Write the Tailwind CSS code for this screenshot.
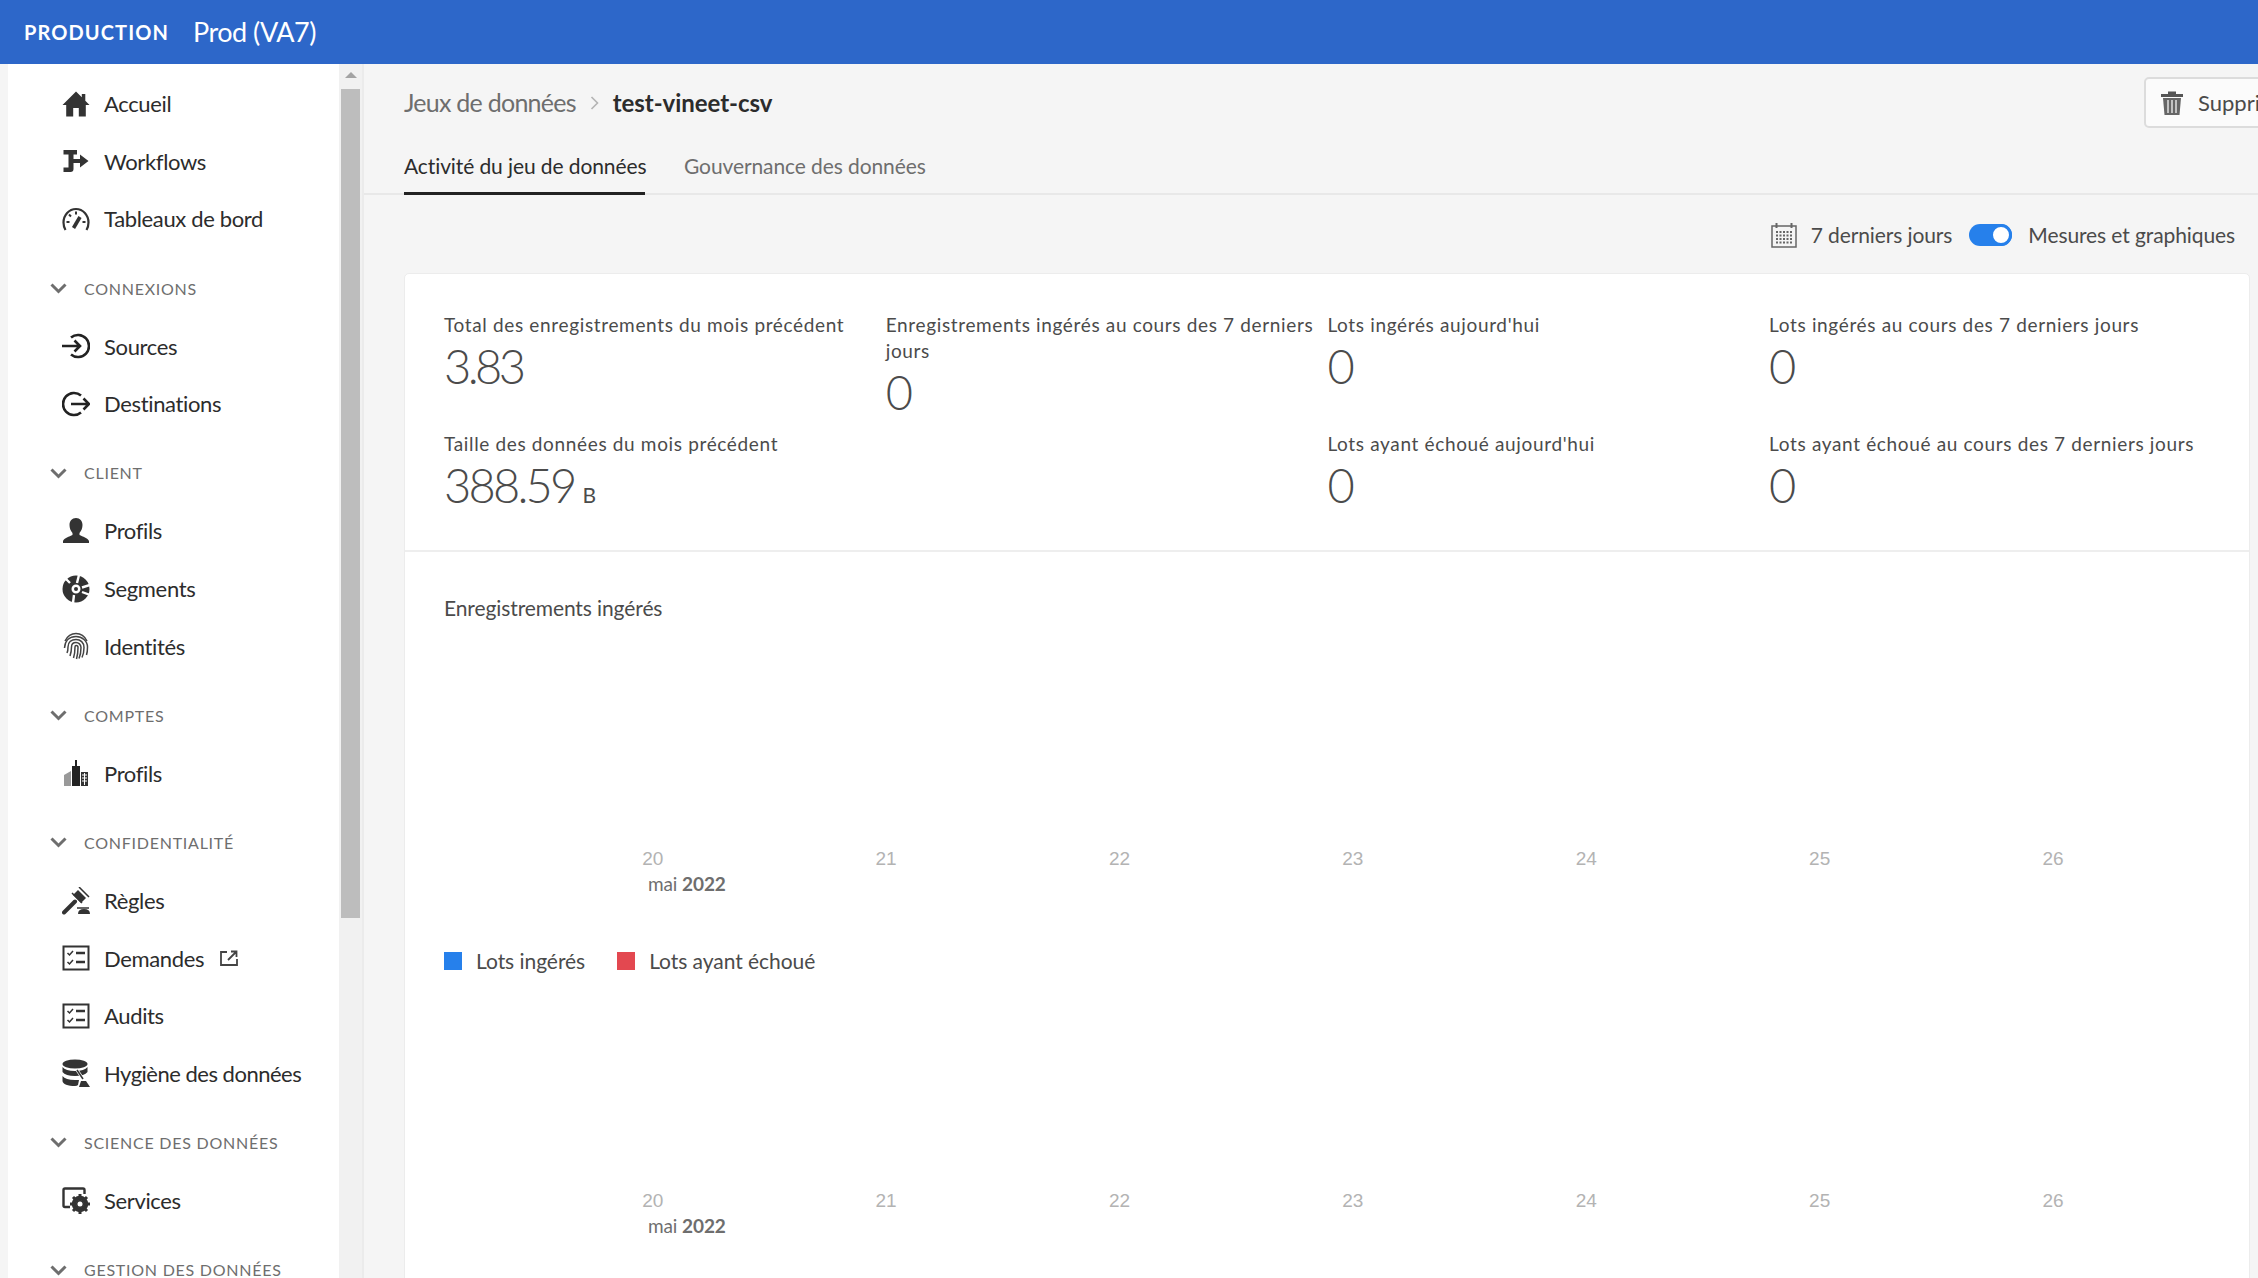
<!DOCTYPE html>
<html lang="fr">
<head>
    <meta charset="UTF-8">
    <title>Jeux de données - test-vineet-csv</title>
    <script src="https://cdn.jsdelivr.net/npm/@tailwindcss/browser@4"></script>
</head>
<body class="bg-[#f5f5f5] font-[Lato,sans-serif] overflow-hidden">
<div class="w-[2258px] h-[1278px] flex flex-col overflow-hidden">
    <!-- top bar -->
    <header class="h-16 shrink-0 bg-[#2d67c9] text-white flex items-center pl-6">
        <span class="w-[169px] text-[20px] font-bold tracking-[1.1px]">PRODUCTION</span>
        <span class="text-[27px] tracking-[-0.5px]">Prod (VA7)</span>
    </header>

    <div class="flex flex-1 min-h-0">
        <!-- left nav -->
        <aside class="w-[331px] ml-2 shrink-0 bg-white pt-[11px] text-[#2c2c2c] text-[22px] tracking-[-0.35px] overflow-hidden">
            <a class="h-[57.6px] flex items-center pl-[54px] gap-[14px]">
                <svg class="w-7 h-7 shrink-0" viewBox="0 0 28 28" fill="#333"><path d="M14 1.500 0.500 15h3.700v11.500h7V18h5.600v8.500h7V15h3.700l-4.200-4.200V4h-3.500v3.300z"/></svg>
                <span>Accueil</span>
            </a>
            <a class="h-[57.6px] flex items-center pl-[54px] gap-[14px]">
                <svg class="w-7 h-7 shrink-0" viewBox="0 0 28 28" fill="#333"><path d="M1.500 3H15v4.500h-3.500V12H18V7.500l8.500 6.500-8.500 6.500V16h-6.500v6q0 3-3 3h-7v-4.500h5V7.500h-5z"/></svg>
                <span>Workflows</span>
            </a>
            <a class="h-[57.6px] flex items-center pl-[54px] gap-[14px]">
                <svg class="w-7 h-7 shrink-0" viewBox="0 0 28 28" fill="none" stroke="#333" stroke-width="2.200"><path d="M3.500 25C2 22.500 1.500 20.500 1.500 17.500 1.500 10 7 4 14 4s12.500 6 12.500 13.500c0 3-.5 5-2 7.500"/><path d="M11.500 23 18 12" stroke-width="3.600"/><path d="M14 6.500v3M7 9.500l2 2M4.500 17h3M23.500 17h-3" stroke-width="2"/></svg>
                <span>Tableaux de bord</span>
            </a>

            <div class="h-[57.6px] mt-3 flex items-center pl-[42px] gap-[17px] text-[#6e6e6e] text-[16px] tracking-[0.75px]">
                <svg class="w-[17px] h-[11px] shrink-0" viewBox="0 0 17 11" fill="none" stroke="#6e6e6e" stroke-width="3"><path d="m1.500 1.500 7 7 7-7"/></svg>
                <span>CONNEXIONS</span>
            </div>
            <a class="h-[57.6px] flex items-center pl-[54px] gap-[14px]">
                <svg class="w-7 h-7 shrink-0" viewBox="0 0 28 28" fill="none" stroke="#222" stroke-width="2.600"><path d="M9 5.500a11 11 0 1 1 0 17"/><path d="M0 14h18M12.500 8.500 18 14l-5.500 5.500"/></svg>
                <span>Sources</span>
            </a>
            <a class="h-[57.6px] flex items-center pl-[54px] gap-[14px]">
                <svg class="w-7 h-7 shrink-0" viewBox="0 0 28 28" fill="none" stroke="#222" stroke-width="2.600"><path d="M19 5.500a11 11 0 1 0 0 17"/><path d="M9 14h18M21.500 8.500 27 14l-5.500 5.500"/></svg>
                <span>Destinations</span>
            </a>

            <div class="h-[57.6px] mt-3 flex items-center pl-[42px] gap-[17px] text-[#6e6e6e] text-[16px] tracking-[0.75px]">
                <svg class="w-[17px] h-[11px] shrink-0" viewBox="0 0 17 11" fill="none" stroke="#6e6e6e" stroke-width="3"><path d="m1.500 1.500 7 7 7-7"/></svg>
                <span>CLIENT</span>
            </div>
            <a class="h-[57.6px] flex items-center pl-[54px] gap-[14px]">
                <svg class="w-7 h-7 shrink-0" viewBox="0 0 28 28" fill="#333"><path d="M14 1c4 0 6.500 3 6.500 7 0 3-1.200 6-3 8v2c3 1.500 8.500 3 9.500 6v2H1v-2c1-3 6.500-4.500 9.500-6v-2c-1.800-2-3-5-3-8 0-4 2.500-7 6.500-7z"/></svg>
                <span>Profils</span>
            </a>
            <a class="h-[57.6px] flex items-center pl-[54px] gap-[14px]">
                <svg class="w-7 h-7 shrink-0" viewBox="0 0 28 28"><circle cx="14" cy="14" r="9" fill="none" stroke="#333" stroke-width="9"/><circle cx="14" cy="14" r="2" fill="#333"/><path d="M15 8 17 0M20 12.500 28 10M20 17l8 3M8 8 3 3M12 20 11 28" stroke="#fff" stroke-width="2.400"/></svg>
                <span>Segments</span>
            </a>
            <a class="h-[57.6px] flex items-center pl-[54px] gap-[14px]">
                <svg class="w-7 h-7 shrink-0" viewBox="0 0 28 28" fill="none" stroke="#444" stroke-width="1.500"><path d="M3 9C6 3 10 1.500 14 1.500s8 1.500 11 7.500"/><path d="M2.500 16C3 8 8 4.500 14 4.500S25.500 9 25.500 15c0 3 0 5-1 8"/><path d="M5 21c1-2 1-4 1-6 0-5 3.500-7.500 8-7.500s8 3 8 8c0 4-.5 7-2 10"/><path d="M8 24c1-3 1.500-6 1.500-9 0-3 2-4.500 4.500-4.500s5 2 5 5c0 4-.5 7.500-2 11"/><path d="M11.500 26c1-3 1.500-7 1.500-11 0-1 .5-1.500 1.200-1.500s1.800.5 1.800 2c0 4-.5 8-1.500 11.500"/></svg>
                <span>Identités</span>
            </a>

            <div class="h-[57.6px] mt-3 flex items-center pl-[42px] gap-[17px] text-[#6e6e6e] text-[16px] tracking-[0.75px]">
                <svg class="w-[17px] h-[11px] shrink-0" viewBox="0 0 17 11" fill="none" stroke="#6e6e6e" stroke-width="3"><path d="m1.500 1.500 7 7 7-7"/></svg>
                <span>COMPTES</span>
            </div>
            <a class="h-[57.6px] flex items-center pl-[54px] gap-[14px]">
                <svg class="w-7 h-7 shrink-0" viewBox="0 0 28 28"><path d="M2 27V16l7-4v15z" fill="#999"/><path d="M10 27V7h3V1h2v6h3v20z" fill="#222"/><path d="M19 27V13h7v14z" fill="#333"/><path d="M20 16h5M20 19h5M20 22h5M22.500 14v12" stroke="#fff" stroke-width="1"/></svg>
                <span>Profils</span>
            </a>

            <div class="h-[57.6px] mt-3 flex items-center pl-[42px] gap-[17px] text-[#6e6e6e] text-[16px] tracking-[0.75px]">
                <svg class="w-[17px] h-[11px] shrink-0" viewBox="0 0 17 11" fill="none" stroke="#6e6e6e" stroke-width="3"><path d="m1.500 1.500 7 7 7-7"/></svg>
                <span>CONFIDENTIALITÉ</span>
            </div>
            <a class="h-[57.6px] flex items-center pl-[54px] gap-[14px]">
                <svg class="w-7 h-7 shrink-0" viewBox="0 0 28 28"><path d="M2 25.500 13 14.500" stroke="#333" stroke-width="4" stroke-linecap="round"/><path d="M11 8l5-5 8 8-5 5z" fill="#333"/><path d="M17 0l10 10M10 6l10 10" stroke="#333" stroke-width="1.500"/><path d="M16 27q0-5 6-5t6 5z" fill="#333"/><path d="M15 21h12" stroke="#333" stroke-width="1.500"/></svg>
                <span>Règles</span>
            </a>
            <a class="h-[57.6px] flex items-center pl-[54px] gap-[14px]">
                <svg class="w-7 h-7 shrink-0" viewBox="0 0 28 28" fill="none" stroke="#333"><rect x="1.500" y="2.500" width="25" height="23" stroke-width="2"/><path d="m5.500 9 2 2 3.500-4M5.500 18l2 2 3.500-4" stroke-width="1.500"/><path d="M14 9h9M14 18h9" stroke-width="2.500"/></svg>
                <span>Demandes</span>
                <svg class="w-[18px] h-[16px] ml-[2px] shrink-0" viewBox="0 0 18 16" fill="none" stroke="#444" stroke-width="1.800"><path d="M7 2H1v13h16V9"/><path d="M8 10 16 2M11 1.500h5.500V7"/></svg>
            </a>
            <a class="h-[57.6px] flex items-center pl-[54px] gap-[14px]">
                <svg class="w-7 h-7 shrink-0" viewBox="0 0 28 28" fill="none" stroke="#333"><rect x="1.500" y="2.500" width="25" height="23" stroke-width="2"/><path d="m5.500 9 2 2 3.500-4M5.500 18l2 2 3.500-4" stroke-width="1.500"/><path d="M14 9h9M14 18h9" stroke-width="2.500"/></svg>
                <span>Audits</span>
            </a>
            <a class="h-[57.6px] flex items-center pl-[54px] gap-[14px]">
                <svg class="w-7 h-7 shrink-0" viewBox="0 0 28 28"><ellipse cx="13" cy="5" rx="12.500" ry="4.500" fill="#333"/><path d="M.5 8q3 4 12.500 4T25.500 8v5q-3 4-12.500 4T.5 13z" fill="#333"/><path d="M.5 17q3 4 12.500 4l4 0-1 5q-1 1-3 1C6 27 .5 25 .5 22z" fill="#333"/><path d="m15 11 6 9" stroke="#fff" stroke-width="3"/><path d="m15 11 6 9" stroke="#333" stroke-width="1.500"/><path d="M17 28l2-6h5l4 6z" fill="#333"/></svg>
                <span class="tracking-[-0.5px]">Hygiène des données</span>
            </a>

            <div class="h-[57.6px] mt-3 flex items-center pl-[42px] gap-[17px] text-[#6e6e6e] text-[16px] tracking-[0.75px]">
                <svg class="w-[17px] h-[11px] shrink-0" viewBox="0 0 17 11" fill="none" stroke="#6e6e6e" stroke-width="3"><path d="m1.500 1.500 7 7 7-7"/></svg>
                <span>SCIENCE DES DONNÉES</span>
            </div>
            <a class="h-[57.6px] flex items-center pl-[54px] gap-[14px]">
                <svg class="w-7 h-7 shrink-0" viewBox="0 0 28 28"><path d="M8 21H3q-1.500 0-1.500-1.500V4Q1.500 2.500 3 2.500h18q1.500 0 1.500 1.500v4" fill="none" stroke="#333" stroke-width="2.400"/><circle cx="18" cy="18" r="6" fill="none" stroke="#333" stroke-width="4.500"/><path d="M18 8v20M8 18h20M11 11l14 14M25 11 11 25" stroke="#333" stroke-width="3"/><circle cx="18" cy="18" r="2.500" fill="#fff"/></svg>
                <span>Services</span>
            </a>

            <div class="h-[57.6px] mt-3 flex items-center pl-[42px] gap-[17px] text-[#6e6e6e] text-[16px] tracking-[0.75px]">
                <svg class="w-[17px] h-[11px] shrink-0" viewBox="0 0 17 11" fill="none" stroke="#6e6e6e" stroke-width="3"><path d="m1.500 1.500 7 7 7-7"/></svg>
                <span>GESTION DES DONNÉES</span>
            </div>
        </aside>

        <!-- scrollbar -->
        <div class="w-[25px] shrink-0 bg-[#f1f1f1] flex flex-col items-center border-r-2 border-[#ebebeb]">
            <div class="mt-[8px] w-0 h-0 border-x-[6px] border-x-transparent border-b-[6px] border-b-[#a3a3a3]"></div>
            <div class="mt-[11px] w-[19px] h-[829px] bg-[#bdbdbd]"></div>
        </div>

        <!-- main -->
        <main class="flex-1 min-w-0 overflow-hidden">
            <div class="pl-10 pt-[13px] flex items-start">
                <div class="w-[1740px] shrink-0 h-[51px] flex items-center text-[25px] tracking-[-0.75px]">
                    <span class="text-[#6e6e6e]">Jeux de données</span>
                    <svg class="w-[9px] h-[14px] mx-[14px]" viewBox="0 0 9 14" fill="none" stroke="#b3b3b3" stroke-width="1.600"><path d="m1.500 1 6 6-6 6"/></svg>
                    <span class="font-bold text-[#2c2c2c] text-[24px] tracking-[-0.05px]">test-vineet-csv</span>
                </div>
                <button class="shrink-0 h-[51px] px-[14px] flex items-center gap-[14px] bg-white/60 border-2 border-[#dcdcdc] rounded-[5px] text-[22px] text-[#4b4b4b] whitespace-nowrap">
                    <svg class="w-[24px] h-[26px] shrink-0" viewBox="0 0 24 26"><path d="M1 4h22v3H1zM8 4V1.500h8V4" fill="#555"/><path d="M3 8h18l-1.500 17h-15z" fill="#666"/><path d="M8 10v13M12 10v13M16 10v13" stroke="#fff" stroke-width="1.200"/></svg>
                    Supprimer le jeu de données
                </button>
            </div>

            <!-- tabs -->
            <div class="h-[67px] px-10 flex items-end border-b-2 border-[#e8e8e8] text-[21px] tracking-[-0.1px]">
                <div class="h-[50px] w-[241px] pb-[5px] flex items-center border-b-[3px] border-[#222] -mb-[2px] text-[#2c2c2c] whitespace-nowrap">Activité du jeu de données</div>
                <div class="h-[50px] ml-[39px] pb-[8px] flex items-center -mb-[2px] text-[#6e6e6e]">Gouvernance des données</div>
            </div>

            <!-- toolbar -->
            <div class="h-[78px] pt-[2px] pr-[23px] flex items-center justify-end text-[21px] tracking-[-0.1px] text-[#4b4b4b]">
                <svg class="w-[26px] h-[25px] mr-[14px] shrink-0" viewBox="0 0 26 25" fill="none" stroke="#666"><rect x="1" y="3" width="24" height="21" stroke-width="1.500"/><path d="M5.500 0v5M20.500 0v5" stroke-width="2"/><path d="M5 9h16M5 12.500h16M5 16h16M5 19.500h16" stroke-width="2" stroke-dasharray="2 1.500"/></svg>
                <span>7 derniers jours</span>
                <span class="ml-[17px] w-[43px] h-[22px] rounded-full bg-[#2680eb] flex items-center justify-end">
                    <span class="w-[22px] h-[22px] rounded-full bg-white border-[3px] border-[#2680eb]"></span>
                </span>
                <span class="ml-[16px]">Mesures et graphiques</span>
            </div>

            <!-- card -->
            <section class="ml-10 w-[1846px] bg-white border border-[#ececec] rounded-[5px] h-[1100px]">
                <div class="h-[278px] border-b-2 border-[#eeeeee] pl-[39px] pt-[38px] grid grid-cols-[441.7px_441.7px_441.7px_441.7px] grid-rows-[119px_100px] text-[#4b4b4b] text-[19px] leading-[26px] tracking-[0.65px]">
                    <div>
                        <div>Total des enregistrements du mois précédent</div>
                        <div class="text-[47px] leading-[50px] mt-[3px] font-light tracking-[-3.6px]">3.83</div>
                    </div>
                    <div class="pr-2">
                        <div>Enregistrements ingérés au cours des 7 derniers jours</div>
                        <div class="text-[47px] leading-[50px] mt-[3px] font-light tracking-[-3.6px]">0</div>
                    </div>
                    <div>
                        <div>Lots ingérés aujourd'hui</div>
                        <div class="text-[47px] leading-[50px] mt-[3px] font-light tracking-[-3.6px]">0</div>
                    </div>
                    <div>
                        <div>Lots ingérés au cours des 7 derniers jours</div>
                        <div class="text-[47px] leading-[50px] mt-[3px] font-light tracking-[-3.6px]">0</div>
                    </div>
                    <div>
                        <div>Taille des données du mois précédent</div>
                        <div class="text-[47px] leading-[50px] mt-[3px] font-light tracking-[-2.8px]">388.59<span class="ml-2 text-[21px] font-normal tracking-normal">B</span></div>
                    </div>
                    <div></div>
                    <div>
                        <div>Lots ayant échoué aujourd'hui</div>
                        <div class="text-[47px] leading-[50px] mt-[3px] font-light tracking-[-3.6px]">0</div>
                    </div>
                    <div>
                        <div>Lots ayant échoué au cours des 7 derniers jours</div>
                        <div class="text-[47px] leading-[50px] mt-[3px] font-light tracking-[-3.6px]">0</div>
                    </div>
                </div>

                <div class="pl-[39px] pt-[42px] h-[295px] text-[21px] leading-[28px] tracking-[-0.1px] text-[#4b4b4b]">Enregistrements ingérés</div>

                <!-- first chart axis -->
                <div class="pl-[131px] grid grid-cols-[repeat(7,233.4px)] text-center font-[Liberation_Sans,sans-serif] text-[19px] leading-[24px] text-[#b3b3b3]">
                    <span>20</span><span>21</span><span>22</span><span>23</span><span>24</span><span>25</span><span>26</span>
                </div>
                <div class="pl-[243px] mt-px text-[19px] leading-[24px] text-[#6e6e6e] tracking-[-0.1px]">mai <b>2022</b></div>

                <div class="pl-[39px] mt-[51px] flex items-center h-[28px] text-[21px] tracking-[-0.05px] text-[#4b4b4b]">
                    <span class="w-[18px] h-[18px] bg-[#2680eb] mr-[14px]"></span>
                    <span>Lots ingérés</span>
                    <span class="w-[18px] h-[18px] bg-[#e34850] ml-[32px] mr-[14px]"></span>
                    <span>Lots ayant échoué</span>
                </div>

                <!-- second chart axis -->
                <div class="mt-[214px] pl-[131px] grid grid-cols-[repeat(7,233.4px)] text-center font-[Liberation_Sans,sans-serif] text-[19px] leading-[24px] text-[#b3b3b3]">
                    <span>20</span><span>21</span><span>22</span><span>23</span><span>24</span><span>25</span><span>26</span>
                </div>
                <div class="pl-[243px] mt-px text-[19px] leading-[24px] text-[#6e6e6e] tracking-[-0.1px]">mai <b>2022</b></div>
            </section>
        </main>
    </div>
</div>
</body>
</html>
